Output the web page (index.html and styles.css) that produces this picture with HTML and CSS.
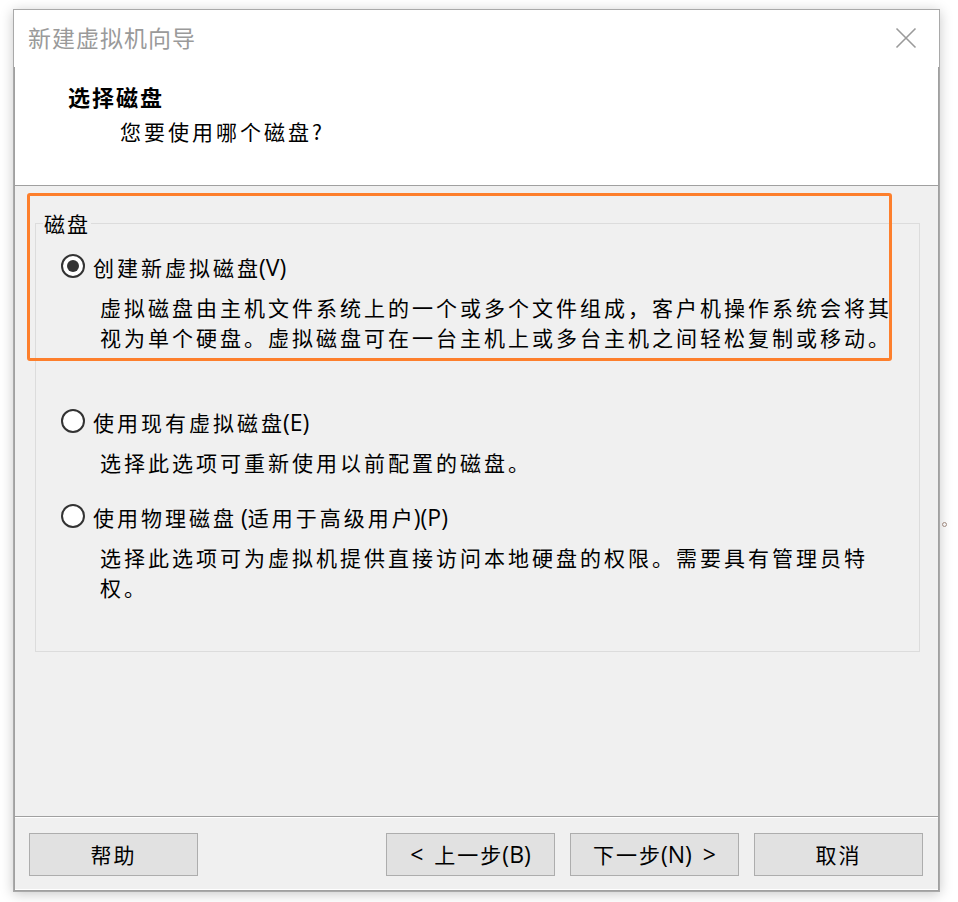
FILE: index.html
```html
<!DOCTYPE html>
<html lang="zh-CN">
<head>
<meta charset="utf-8">
<title>新建虚拟机向导</title>
<link rel="stylesheet" href="styles.css">
</head>
<body>
<div class="window">
  <div class="titlebar">
    <span class="title">新建虚拟机向导</span>
    <svg class="close" width="22" height="22" viewBox="0 0 22 22" aria-hidden="true">
      <path d="M1.5 1.5 L20.5 20.5 M20.5 1.5 L1.5 20.5" stroke="#9a9a9a" stroke-width="1.6" fill="none"/>
    </svg>
  </div>
  <div class="client">
    <div class="header">
      <div class="h-title">选择磁盘</div>
      <div class="h-sub">您要使用哪个磁盘?</div>
    </div>
    <div class="content">
      <fieldset class="group">
        <legend class="legend">磁盘</legend>
        <div class="option">
          <div class="row"><span class="radio checked"></span><span class="label">创建新虚拟磁<span class="tight">盘</span><span class="latin">(V)</span></span></div>
          <div class="desc desc-tall">虚拟磁盘由主机文件系统上的一个或多个文件组成，客户机操作系统会将其视为单个硬盘。虚拟磁盘可在一台主机上或多台主机之间轻松复制或移动。</div>
        </div>
        <div class="option">
          <div class="row"><span class="radio"></span><span class="label">使用现有虚拟磁<span class="tight">盘</span><span class="latin">(E)</span></span></div>
          <div class="desc">选择此选项可重新使用以前配置的磁盘。</div>
        </div>
        <div class="option">
          <div class="row"><span class="radio"></span><span class="label">使用物理磁<span class="tight">盘</span><span class="latin"> (</span>适用于高级用<span class="tight">户</span><span class="latin">)(P)</span></span></div>
          <div class="desc">选择此选项可为虚拟机提供直接访问本地硬盘的权限。需要具有管理员特权。</div>
        </div>
      </fieldset>
    </div>
    <div class="footer">
      <button class="btn">帮助</button>
      <div class="nav">
        <button class="btn"><span class="latin wide">&lt; </span>上一<span class="tight">步</span><span class="latin">(B)</span></button>
        <button class="btn">下一<span class="tight">步</span><span class="latin wide">(N) &gt;</span></button>
        <button class="btn">取消</button>
      </div>
    </div>
  </div>
</div>
<div class="highlight"></div>
<span class="stray"></span>
</body>
</html>
```
FILE: styles.css
```css
html, body {
  margin: 0;
  padding: 0;
  background: #ffffff;
}
body {
  position: relative;
  width: 958px;
  height: 902px;
  overflow: hidden;
  font-family: "Noto Sans CJK SC", "Noto Sans", sans-serif;
  color: #000;
}
.window {
  margin: 9px 0 0 13px;
  width: 927px;
  height: 883px;
  box-sizing: border-box;
  border: 1px solid #a9a9a9;
  background: #f0f0f0;
  display: flex;
  flex-direction: column;
  box-shadow: 0 2px 12px rgba(0, 0, 0, 0.22);
}
.titlebar {
  height: 57px;
  flex: none;
  background: #fff;
  display: flex;
  align-items: center;
  justify-content: space-between;
  padding: 0 22px 0 14px;
}
.title {
  font-size: 23px;
  letter-spacing: 1px;
  color: #9a9a9a;
  line-height: 30px;
  margin-top: -4px;
}
.close {
  display: block;
  margin-top: -2px;
}
.client {
  flex: 1;
  display: flex;
  flex-direction: column;
  border-left: 1px solid #a0a0a0;
  border-right: 1px solid #a0a0a0;
  border-bottom: 1px solid #a0a0a0;
  box-shadow: inset 0 -1px #fff;
}
.header {
  flex: none;
  box-sizing: border-box;
  background: #fff;
  border-bottom: 1px solid #a0a0a0;
  height: 119px;
  padding: 14px 0 0 53px;
}
.h-title {
  font-size: 22px;
  font-weight: 700;
  letter-spacing: 2px;
  line-height: 30px;
}
.h-sub {
  font-size: 21px;
  letter-spacing: 3px;
  line-height: 30px;
  margin: 5px 0 0 52px;
}
.content {
  flex: 1;
  padding-top: 25px;
}
.group {
  margin: 0 18px 0 20px;
  border: 1px solid #dcdcdc;
  padding: 16px 0 49px 0;
}
.legend {
  font-size: 21px;
  letter-spacing: 2px;
  line-height: 24px;
  padding: 0 1px;
  margin-left: 7px;
}
.option {
  margin-bottom: 24px;
  padding-left: 25px;
}
.option:last-child {
  margin-bottom: 0;
}
.row {
  display: flex;
  align-items: center;
  gap: 8px;
  height: 30px;
}
.radio {
  width: 24px;
  height: 24px;
  box-sizing: border-box;
  border: 2.5px solid #333;
  border-radius: 50%;
  background: #fff;
  display: flex;
  align-items: center;
  justify-content: center;
  flex: none;
}
.radio.checked::after {
  content: "";
  width: 12px;
  height: 12px;
  border-radius: 50%;
  background: #333;
}
.label {
  font-size: 21px;
  letter-spacing: 3px;
  line-height: 30px;
  position: relative;
  top: 1px;
}
.tight {
  letter-spacing: 1px;
}
.latin {
  letter-spacing: 0;
  font-family: "Open Sans", "Noto Sans", sans-serif;
  font-size: 23px;
}
.latin.wide {
  word-spacing: 5px;
}
.desc {
  font-size: 21px;
  letter-spacing: 3px;
  line-height: 30px;
  margin: 11px 0 0 39px;
  width: 800px;
}
.desc-tall {
  min-height: 90px;
}
.footer {
  height: 74px;
  flex: none;
  box-sizing: border-box;
  border-top: 1px solid #a0a0a0;
  box-shadow: inset 0 1px #fff;
  padding: 16px 15px 0 14px;
  display: flex;
  justify-content: space-between;
  align-items: flex-start;
}
.nav {
  display: flex;
  gap: 15px;
}
.btn {
  width: 169px;
  height: 43px;
  box-sizing: border-box;
  border: 1px solid #adadad;
  background: #e1e1e1;
  font-family: "Noto Sans CJK SC", "Noto Sans", sans-serif;
  font-size: 21px;
  letter-spacing: 2px;
  color: #000;
  padding: 0;
  line-height: 41px;
}
.highlight {
  position: absolute;
  left: 27px;
  top: 193px;
  width: 865px;
  height: 168px;
  box-sizing: border-box;
  border: 3px solid #fd7f2c;
  border-radius: 3px;
  pointer-events: none;
}
.stray {
  position: absolute;
  left: 942px;
  top: 522px;
  width: 5px;
  height: 5px;
  box-sizing: border-box;
  border: 1px solid #a08a80;
  border-radius: 50%;
}
```
